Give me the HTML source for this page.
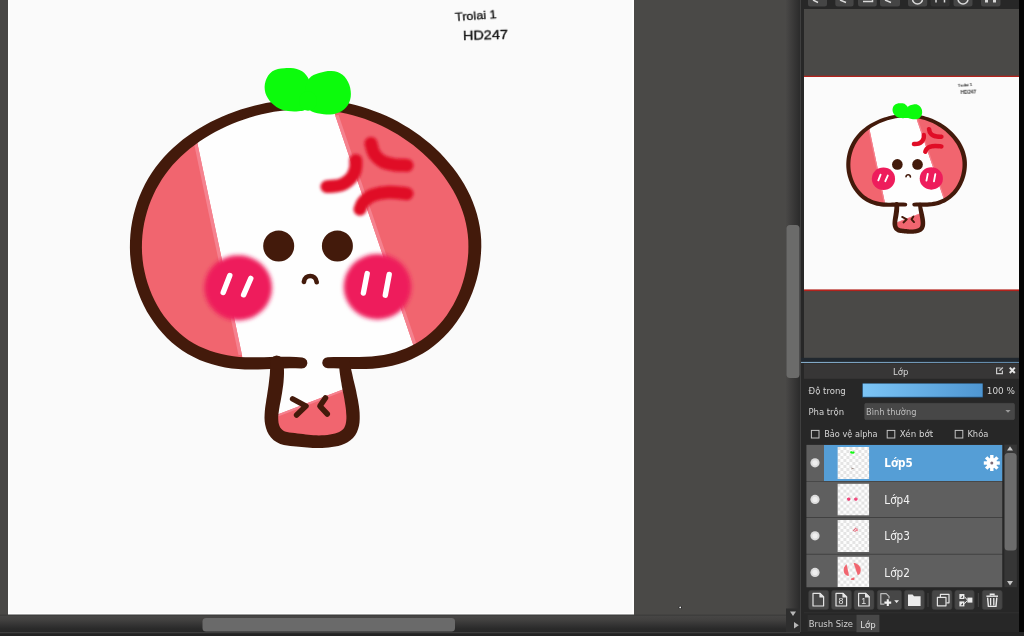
<!DOCTYPE html>
<html lang="vi"><head><meta charset="utf-8"><title>Lớp</title>
<style>html,body{margin:0;padding:0;background:#4a4947;overflow:hidden}svg{display:block}text{filter:url(#gray)}</style></head>
<body>
<svg width="1024" height="636" viewBox="0 0 1024 636">
<defs><filter id="gray" x="-5%" y="-30%" width="110%" height="160%"><feColorMatrix type="saturate" values="0"/></filter><g id="art">
<clipPath id="capclip"><path d="M301.9 363.0C298.8 362.9 289.5 362.5 283.2 362.5C276.9 362.6 270.6 363.1 264.2 363.2C257.9 363.4 251.5 363.7 245.2 363.4C238.8 363.0 232.4 362.5 226.2 361.3C220.0 360.2 213.7 358.6 207.8 356.5C202.0 354.4 196.2 351.8 190.8 348.7C185.5 345.6 180.4 341.9 175.7 337.8C171.1 333.8 166.7 329.2 162.8 324.3C158.9 319.5 155.3 314.2 152.2 308.7C149.1 303.2 146.4 297.4 144.2 291.5C141.9 285.5 140.1 279.3 138.7 273.1C137.4 266.9 136.5 260.5 136.1 254.1C135.7 247.8 135.8 241.3 136.4 235.0C137.0 228.7 138.0 222.4 139.5 216.2C141.0 210.1 142.9 204.0 145.3 198.2C147.6 192.4 150.4 186.7 153.5 181.3C156.7 175.9 160.3 170.8 164.2 165.9C168.1 161.1 172.4 156.5 177.0 152.3C181.5 148.0 186.4 144.0 191.5 140.3C196.6 136.6 201.9 133.1 207.4 130.0C212.9 126.9 218.7 124.0 224.5 121.4C230.3 118.8 236.3 116.5 242.3 114.5C248.4 112.5 254.5 110.8 260.7 109.3C266.8 107.9 273.1 106.7 279.3 105.9C285.6 105.0 291.9 104.5 298.1 104.2C304.4 104.0 310.7 104.0 317.0 104.4C323.2 104.7 329.5 105.4 335.7 106.3C341.9 107.3 348.0 108.6 354.1 110.1C360.2 111.7 366.2 113.6 372.1 115.9C378.0 118.1 383.8 120.7 389.5 123.5C395.2 126.4 400.8 129.6 406.1 133.1C411.5 136.6 416.7 140.4 421.7 144.4C426.6 148.5 431.4 152.8 435.8 157.4C440.2 161.9 444.4 166.7 448.2 171.7C452.1 176.7 455.6 182.0 458.7 187.4C461.8 192.8 464.5 198.4 466.8 204.1C469.0 209.9 470.9 215.8 472.2 221.8C473.5 227.9 474.4 234.1 474.7 240.3C475.0 246.6 474.8 253.0 474.1 259.3C473.4 265.6 472.2 272.0 470.6 278.2C468.9 284.4 466.8 290.5 464.2 296.4C461.6 302.3 458.6 308.0 455.2 313.4C451.8 318.7 448.0 323.9 443.8 328.5C439.6 333.2 435.0 337.5 430.1 341.2C425.1 345.0 419.8 348.3 414.3 351.1C408.8 354.0 402.9 356.3 396.9 358.1C391.0 359.9 384.7 361.1 378.4 361.9C372.2 362.8 365.6 362.8 359.3 363.0C352.9 363.1 345.4 362.8 340.1 362.7C334.8 362.7 329.7 362.8 327.7 362.8Z"/></clipPath>
<clipPath id="stemclip"><path d="M276.8 362.0C276.8 363.4 277.0 367.8 277.0 370.6C277.0 373.4 276.8 376.1 276.6 378.8C276.3 381.5 276.0 384.1 275.7 386.8C275.3 389.5 274.8 392.1 274.4 394.9C273.9 397.7 273.4 400.5 273.0 403.4C272.5 406.2 271.9 409.3 271.7 412.2C271.5 415.1 271.2 418.1 271.5 420.8C271.8 423.6 272.2 426.3 273.3 428.7C274.4 431.0 276.0 433.4 278.0 435.0C280.0 436.6 282.7 437.6 285.4 438.4C288.0 439.2 291.2 439.3 294.0 439.7C296.8 440.1 299.6 440.3 302.3 440.6C305.1 440.9 307.7 441.2 310.4 441.4C313.2 441.5 316.0 441.7 318.9 441.7C321.8 441.7 325.0 441.6 327.9 441.2C330.9 440.9 333.9 440.5 336.7 439.7C339.4 438.9 342.0 438.0 344.2 436.6C346.4 435.2 348.3 433.6 349.7 431.6C351.0 429.5 351.9 427.0 352.4 424.4C353.0 421.8 353.1 418.9 353.1 415.9C353.0 413.0 352.6 409.9 352.3 406.9C351.9 403.9 351.3 400.9 350.8 398.1C350.3 395.3 349.8 392.6 349.2 389.9C348.7 387.3 348.1 384.7 347.6 382.0C347.0 379.4 346.5 376.8 346.0 374.1C345.6 371.4 345.1 367.7 344.8 365.8C344.5 364.0 344.5 363.4 344.5 362.9Z"/></clipPath>
<filter id="b1" x="-20%" y="-20%" width="140%" height="140%"><feGaussianBlur stdDeviation="1.9"/></filter>
<filter id="b2" x="-20%" y="-20%" width="140%" height="140%"><feGaussianBlur stdDeviation="1.4"/></filter>
<g id="l-base">
 <path d="M301.9 363.0C298.8 362.9 289.5 362.5 283.2 362.5C276.9 362.6 270.6 363.1 264.2 363.2C257.9 363.4 251.5 363.7 245.2 363.4C238.8 363.0 232.4 362.5 226.2 361.3C220.0 360.2 213.7 358.6 207.8 356.5C202.0 354.4 196.2 351.8 190.8 348.7C185.5 345.6 180.4 341.9 175.7 337.8C171.1 333.8 166.7 329.2 162.8 324.3C158.9 319.5 155.3 314.2 152.2 308.7C149.1 303.2 146.4 297.4 144.2 291.5C141.9 285.5 140.1 279.3 138.7 273.1C137.4 266.9 136.5 260.5 136.1 254.1C135.7 247.8 135.8 241.3 136.4 235.0C137.0 228.7 138.0 222.4 139.5 216.2C141.0 210.1 142.9 204.0 145.3 198.2C147.6 192.4 150.4 186.7 153.5 181.3C156.7 175.9 160.3 170.8 164.2 165.9C168.1 161.1 172.4 156.5 177.0 152.3C181.5 148.0 186.4 144.0 191.5 140.3C196.6 136.6 201.9 133.1 207.4 130.0C212.9 126.9 218.7 124.0 224.5 121.4C230.3 118.8 236.3 116.5 242.3 114.5C248.4 112.5 254.5 110.8 260.7 109.3C266.8 107.9 273.1 106.7 279.3 105.9C285.6 105.0 291.9 104.5 298.1 104.2C304.4 104.0 310.7 104.0 317.0 104.4C323.2 104.7 329.5 105.4 335.7 106.3C341.9 107.3 348.0 108.6 354.1 110.1C360.2 111.7 366.2 113.6 372.1 115.9C378.0 118.1 383.8 120.7 389.5 123.5C395.2 126.4 400.8 129.6 406.1 133.1C411.5 136.6 416.7 140.4 421.7 144.4C426.6 148.5 431.4 152.8 435.8 157.4C440.2 161.9 444.4 166.7 448.2 171.7C452.1 176.7 455.6 182.0 458.7 187.4C461.8 192.8 464.5 198.4 466.8 204.1C469.0 209.9 470.9 215.8 472.2 221.8C473.5 227.9 474.4 234.1 474.7 240.3C475.0 246.6 474.8 253.0 474.1 259.3C473.4 265.6 472.2 272.0 470.6 278.2C468.9 284.4 466.8 290.5 464.2 296.4C461.6 302.3 458.6 308.0 455.2 313.4C451.8 318.7 448.0 323.9 443.8 328.5C439.6 333.2 435.0 337.5 430.1 341.2C425.1 345.0 419.8 348.3 414.3 351.1C408.8 354.0 402.9 356.3 396.9 358.1C391.0 359.9 384.7 361.1 378.4 361.9C372.2 362.8 365.6 362.8 359.3 363.0C352.9 363.1 345.4 362.8 340.1 362.7C334.8 362.7 329.7 362.8 327.7 362.8Z" fill="#fefefe"/>
 <path d="M276.8 362.0C276.8 363.4 277.0 367.8 277.0 370.6C277.0 373.4 276.8 376.1 276.6 378.8C276.3 381.5 276.0 384.1 275.7 386.8C275.3 389.5 274.8 392.1 274.4 394.9C273.9 397.7 273.4 400.5 273.0 403.4C272.5 406.2 271.9 409.3 271.7 412.2C271.5 415.1 271.2 418.1 271.5 420.8C271.8 423.6 272.2 426.3 273.3 428.7C274.4 431.0 276.0 433.4 278.0 435.0C280.0 436.6 282.7 437.6 285.4 438.4C288.0 439.2 291.2 439.3 294.0 439.7C296.8 440.1 299.6 440.3 302.3 440.6C305.1 440.9 307.7 441.2 310.4 441.4C313.2 441.5 316.0 441.7 318.9 441.7C321.8 441.7 325.0 441.6 327.9 441.2C330.9 440.9 333.9 440.5 336.7 439.7C339.4 438.9 342.0 438.0 344.2 436.6C346.4 435.2 348.3 433.6 349.7 431.6C351.0 429.5 351.9 427.0 352.4 424.4C353.0 421.8 353.1 418.9 353.1 415.9C353.0 413.0 352.6 409.9 352.3 406.9C351.9 403.9 351.3 400.9 350.8 398.1C350.3 395.3 349.8 392.6 349.2 389.9C348.7 387.3 348.1 384.7 347.6 382.0C347.0 379.4 346.5 376.8 346.0 374.1C345.6 371.4 345.1 367.7 344.8 365.8C344.5 364.0 344.5 363.4 344.5 362.9Z" fill="#fefefe"/>
</g>
<g id="l-pink">
 <g clip-path="url(#capclip)">
  <polygon points="100,90 185.6,90 197.2,142.4 241.9,354.8 246,380 100,380" fill="#f1656f"/>
  <line x1="195.5" y1="142.4" x2="240.2" y2="354.8" stroke="#f5828f" stroke-width="3.4"/>
  <polygon points="335.2,115.2 327,91 500,91 500,380 425,380 413.1,344.2" fill="#f1656f"/>
  <line x1="336.9" y1="115.2" x2="414.8" y2="344.2" stroke="#f5828f" stroke-width="3.4"/>
 </g>
 <g clip-path="url(#stemclip)">
  <polygon points="260,421.3 360,382.9 360,450 260,450" fill="#f1656f"/>
  <line x1="260" y1="422.3" x2="360" y2="383.9" stroke="#f5828f" stroke-width="2"/>
 </g>
</g>
<g id="l-anger" fill="none" stroke="#e00f27" stroke-width="13" stroke-linecap="round" filter="url(#b2)">
 <path d="M370.9 143.4C371.5 145.2 372.4 151.0 374.4 154.1C376.4 157.2 379.6 160.0 382.9 161.8C386.2 163.6 390.2 164.1 394.2 164.7C398.2 165.3 404.9 165.3 407.0 165.4"/>
 <path d="M355.8 160.4C355.7 161.9 356.2 166.5 355.3 169.6C354.4 172.7 352.9 176.2 350.4 178.8C347.9 181.4 344.4 183.9 340.5 185.2C336.6 186.5 329.2 186.4 327.0 186.6"/>
 <path d="M360.0 209.2C360.6 207.9 361.6 203.8 363.8 201.5C366.0 199.2 368.9 196.6 373.0 195.1C377.1 193.6 382.9 192.5 388.6 192.3C394.3 192.1 403.9 193.5 407.0 193.7"/>
</g>
<g id="l-blush">
 <ellipse cx="238.2" cy="287.8" rx="33.8" ry="32.6" fill="#ee1c5b" filter="url(#b1)"/>
 <ellipse cx="377.5" cy="286.7" rx="33.8" ry="32.8" fill="#ee1c5b" filter="url(#b1)"/>
 <g stroke="#fff" stroke-width="5.4" stroke-linecap="round">
  <line x1="229.8" y1="275.6" x2="223.2" y2="292.4"/>
  <line x1="250.8" y1="278.4" x2="243.6" y2="294.8"/>
  <line x1="367.2" y1="273.6" x2="363.4" y2="293"/>
  <line x1="389.2" y1="274.4" x2="385.3" y2="295.2"/>
 </g>
</g>
<g id="l-line">
 <circle cx="278.7" cy="246" r="15.5" fill="#431a0b"/>
 <circle cx="337.4" cy="246" r="15.5" fill="#431a0b"/>
 <g fill="none" stroke="#431a0b" stroke-linecap="round" stroke-linejoin="round">
  <path d="M303.9 281.8C305 274 315.6 274 316.7 282.2" stroke-width="4.7"/>
  <path d="M292.6 398.8L306 406.1L296.6 415" stroke-width="5.5"/>
  <path d="M325.5 397.9L319.9 406.1L327.3 414" stroke-width="5.5"/>
 </g>
 <path d="M302.3 357.5L296.0 357.0L289.5 356.7L283.1 356.7L276.7 356.8L270.3 356.9L264.0 357.2L257.7 357.3L251.5 357.3L245.4 357.2L239.3 356.9L233.3 356.2L227.3 355.3L221.4 354.1L215.6 352.6L209.9 350.8L204.4 348.6L199.0 346.2L193.9 343.5L188.9 340.4L184.2 337.0L179.7 333.3L175.4 329.3L171.3 325.1L167.5 320.6L163.9 315.9L160.5 310.9L157.4 305.8L154.6 300.5L152.0 295.0L149.7 289.3L147.7 283.6L146.0 277.8L144.6 271.8L143.4 265.8L142.6 259.8L142.1 253.7L141.9 247.7L142.0 241.6L142.4 235.6L143.1 229.5L144.1 223.6L145.4 217.7L147.0 211.8L148.8 206.1L150.9 200.5L153.3 195.0L155.9 189.6L158.8 184.4L161.9 179.3L165.2 174.4L168.8 169.7L172.6 165.1L176.7 160.7L180.9 156.5L185.4 152.5L190.0 148.6L194.8 144.9L199.8 141.3L204.9 138.0L210.2 134.8L215.5 131.8L221.0 128.9L226.7 126.3L232.4 123.8L238.1 121.5L244.0 119.4L249.9 117.5L255.8 115.8L261.8 114.3L267.9 113.0L273.9 111.8L280.0 110.9L286.1 110.2L292.2 109.6L298.4 109.3L304.5 109.1L310.6 109.2L316.7 109.4L322.8 109.9L328.9 110.5L334.9 111.4L340.9 112.5L346.9 113.7L352.8 115.2L358.7 116.9L364.5 118.8L370.2 120.9L375.9 123.2L381.5 125.7L387.0 128.5L392.4 131.4L397.8 134.5L403.0 137.9L408.1 141.4L413.1 145.1L417.9 149.0L422.6 153.0L427.1 157.2L431.5 161.6L435.6 166.1L439.6 170.7L443.3 175.5L446.8 180.4L450.1 185.4L453.2 190.5L456.0 195.8L458.5 201.1L460.8 206.5L462.8 212.0L464.5 217.6L465.9 223.2L467.0 229.0L467.8 234.8L468.3 240.7L468.4 246.6L468.3 252.6L467.8 258.6L467.0 264.6L465.9 270.6L464.5 276.6L462.8 282.5L460.9 288.3L458.6 294.0L456.0 299.5L453.2 304.9L450.1 310.1L446.8 315.2L443.2 320.0L439.3 324.5L435.3 328.8L430.9 332.8L426.4 336.5L421.6 339.9L416.7 343.0L411.5 345.7L406.2 348.2L400.8 350.3L395.2 352.2L389.4 353.7L383.6 354.9L377.7 355.8L371.6 356.4L365.5 356.8L359.2 357.0L352.9 357.0L346.5 357.0L340.2 357.0L333.8 357.1L327.6 357.3L324.9 358.1L322.9 360.1L322.2 362.9L323.0 365.6L325.0 367.6L327.8 368.3L333.9 368.3L340.0 368.5L346.3 368.7L352.8 368.9L359.3 369.0L365.9 368.9L372.5 368.7L379.2 368.1L385.8 367.1L392.3 365.7L398.7 364.0L405.0 361.9L411.1 359.4L417.1 356.6L422.8 353.4L428.4 349.9L433.7 346.0L438.8 341.8L443.6 337.3L448.2 332.5L452.5 327.4L456.6 322.1L460.3 316.6L463.8 310.9L466.9 304.9L469.8 298.8L472.4 292.6L474.6 286.3L476.6 279.8L478.2 273.3L479.5 266.7L480.4 260.0L481.0 253.3L481.3 246.7L481.2 240.0L480.7 233.4L479.8 226.9L478.5 220.4L476.9 214.1L475.0 207.9L472.7 201.8L470.2 195.8L467.3 189.9L464.2 184.2L460.8 178.7L457.1 173.2L453.2 168.0L449.0 162.9L444.7 157.9L440.1 153.1L435.4 148.5L430.5 144.1L425.4 139.9L420.1 135.8L414.7 132.0L409.2 128.3L403.6 124.9L397.8 121.6L392.0 118.6L386.1 115.8L380.1 113.2L374.0 110.9L367.9 108.7L361.7 106.8L355.4 105.1L349.2 103.6L342.8 102.3L336.5 101.2L330.1 100.4L323.7 99.7L317.3 99.3L310.8 99.0L304.4 99.0L297.9 99.2L291.5 99.5L285.1 100.1L278.6 100.9L272.2 101.9L265.9 103.0L259.5 104.4L253.2 105.9L246.9 107.7L240.7 109.6L234.5 111.7L228.4 114.0L222.4 116.5L216.4 119.2L210.5 122.1L204.7 125.2L199.1 128.5L193.5 132.0L188.1 135.7L182.9 139.6L177.9 143.7L173.0 148.0L168.3 152.5L163.8 157.3L159.6 162.2L155.6 167.3L151.8 172.7L148.3 178.3L145.1 184.0L142.2 189.9L139.6 195.9L137.3 202.1L135.3 208.4L133.6 214.8L132.2 221.3L131.1 227.9L130.4 234.5L130.0 241.1L129.9 247.8L130.1 254.5L130.7 261.1L131.6 267.8L132.9 274.3L134.5 280.8L136.4 287.3L138.6 293.6L141.1 299.7L143.9 305.8L147.0 311.7L150.5 317.3L154.2 322.8L158.1 328.1L162.4 333.1L167.0 337.9L171.8 342.4L176.8 346.6L182.2 350.4L187.8 353.9L193.6 357.1L199.6 359.9L205.8 362.3L212.1 364.3L218.6 366.0L225.1 367.4L231.7 368.4L238.3 369.1L244.9 369.5L251.5 369.6L258.0 369.5L264.4 369.3L270.8 369.0L277.1 368.7L283.3 368.4L289.4 368.3L295.5 368.3L301.6 368.5L304.4 367.9L306.5 366.0L307.4 363.3L306.9 360.6L305.0 358.4Z" fill="#431a0b"/>
 <path d="M270.3 362.3L270.3 365.2L270.2 367.8L270.0 370.5L269.9 373.0L269.7 375.6L269.4 378.1L269.1 380.7L268.8 383.2L268.5 385.8L268.1 388.4L267.7 391.0L267.3 393.7L266.9 396.5L266.4 399.3L266.0 402.2L265.5 405.2L265.1 408.3L264.8 411.5L264.6 414.8L264.5 418.0L264.7 421.4L265.2 424.7L266.0 428.1L267.2 431.4L268.8 434.5L271.0 437.5L273.7 440.2L276.9 442.3L280.3 443.9L283.8 444.9L287.1 445.6L290.3 446.0L293.3 446.3L296.1 446.6L298.9 446.8L301.6 447.1L304.4 447.3L307.2 447.6L310.0 447.7L312.9 447.9L315.9 447.9L318.9 448.0L322.1 447.9L325.3 447.8L328.6 447.5L331.8 447.1L335.1 446.6L338.3 445.9L341.5 444.9L344.6 443.7L347.6 442.2L350.4 440.3L353.0 438.0L355.2 435.2L356.9 432.2L358.1 429.0L359.0 425.7L359.5 422.4L359.7 419.1L359.7 415.8L359.6 412.5L359.3 409.2L358.9 406.0L358.4 402.9L357.9 399.8L357.3 396.9L356.7 394.1L356.2 391.3L355.6 388.6L355.0 386.0L354.4 383.4L353.7 380.8L353.1 378.2L352.6 375.7L352.0 373.1L351.4 370.5L350.9 367.9L350.4 365.2L349.9 362.3L348.9 359.7L346.7 357.9L343.9 357.5L341.2 358.5L339.5 360.7L339.0 363.5L339.2 366.5L339.4 369.5L339.7 372.3L340.1 375.2L340.5 377.9L340.9 380.6L341.4 383.3L341.8 386.0L342.3 388.6L342.8 391.3L343.4 393.9L343.9 396.6L344.4 399.3L344.8 402.1L345.3 404.9L345.7 407.8L346.0 410.6L346.2 413.4L346.4 416.1L346.4 418.6L346.2 421.0L345.9 423.1L345.4 425.0L344.8 426.6L344.1 427.9L343.3 429.0L342.2 430.0L340.8 431.0L339.2 431.9L337.2 432.8L335.0 433.5L332.5 434.1L330.0 434.6L327.3 435.0L324.5 435.2L321.7 435.3L318.9 435.4L316.2 435.3L313.5 435.2L310.9 435.0L308.3 434.7L305.7 434.4L303.0 434.1L300.3 433.8L297.5 433.4L294.7 433.1L291.9 432.8L289.3 432.4L287.0 431.9L285.0 431.4L283.5 430.7L282.2 429.8L281.2 428.7L280.2 427.4L279.5 426.0L278.9 424.3L278.5 422.4L278.3 420.3L278.2 418.0L278.3 415.5L278.6 412.9L279.0 410.1L279.4 407.4L279.9 404.5L280.5 401.7L281.0 398.9L281.5 396.1L282.0 393.3L282.4 390.6L282.8 387.8L283.2 385.0L283.5 382.2L283.7 379.4L283.9 376.5L284.0 373.6L284.0 370.7L283.9 367.7L283.6 364.7L283.3 361.7L282.3 358.5L279.8 356.2L276.5 355.5L273.3 356.5L271.0 359.0Z" fill="#431a0b"/>
</g>
<g id="l-leaf" fill="#0cfb0c"><path d="M264.6 86.9C264.6 85.0 265.0 82.8 265.6 80.9C266.2 79.0 267.1 77.0 268.2 75.4C269.4 73.8 270.8 72.3 272.4 71.2C274.0 70.2 275.9 69.5 277.9 69.0C279.9 68.5 282.1 68.4 284.2 68.2C286.3 68.1 288.6 68.0 290.7 68.1C292.8 68.2 294.9 68.4 296.8 68.9C298.7 69.4 300.5 70.3 302.1 71.3C303.7 72.4 305.1 73.8 306.3 75.3C307.6 76.8 308.6 78.6 309.4 80.4C310.1 82.2 310.7 84.2 311.0 86.3C311.3 88.3 311.4 90.4 311.2 92.5C311.1 94.6 310.6 96.7 310.2 98.8C309.7 100.8 309.1 103.0 308.3 104.8C307.5 106.6 306.8 108.4 305.4 109.4C304.1 110.5 302.2 110.8 300.3 111.1C298.4 111.5 296.2 111.4 294.2 111.4C292.1 111.4 290.0 111.4 288.0 111.1C285.9 110.8 283.9 110.4 282.0 109.7C280.0 109.0 278.2 108.1 276.4 107.0C274.7 105.9 273.1 104.5 271.6 103.1C270.2 101.6 268.9 100.0 267.9 98.3C266.9 96.6 266.0 94.8 265.4 92.9C264.9 91.0 264.6 88.9 264.6 86.9Z"/><path d="M306.5 83.7C307.1 81.8 308.0 80.0 309.2 78.5C310.3 77.1 311.8 76.1 313.5 75.1C315.1 74.2 317.1 73.5 319.1 72.9C321.0 72.3 323.2 71.7 325.2 71.4C327.3 71.1 329.5 70.9 331.5 71.0C333.6 71.1 335.6 71.3 337.5 72.0C339.3 72.6 341.0 73.6 342.5 74.8C344.1 76.0 345.4 77.5 346.5 79.2C347.6 80.9 348.6 82.8 349.3 84.7C350.0 86.7 350.5 88.8 350.7 90.9C350.9 92.9 351.0 95.1 350.7 97.1C350.4 99.1 349.9 101.1 349.1 102.8C348.4 104.6 347.3 106.2 346.0 107.6C344.7 109.1 343.2 110.3 341.5 111.3C339.8 112.3 338.0 113.1 336.1 113.6C334.2 114.2 332.1 114.4 330.0 114.5C328.0 114.6 325.9 114.4 323.8 114.2C321.7 114.0 319.4 113.8 317.4 113.3C315.4 112.9 313.4 112.4 311.8 111.5C310.2 110.6 308.9 109.3 307.8 107.7C306.8 106.2 306.1 104.2 305.6 102.3C305.1 100.3 304.9 98.1 304.8 96.0C304.7 93.9 304.8 91.7 305.1 89.7C305.4 87.6 305.8 85.6 306.5 83.7Z"/><ellipse cx="308" cy="101" rx="9" ry="9.8"/></g>
<g id="l-text" fill="#141414" stroke="#141414" stroke-width="0.35" font-family="'Liberation Sans','DejaVu Sans',sans-serif">
 <text x="455.2" y="20.6" font-size="11.6" textLength="41.5" lengthAdjust="spacingAndGlyphs" transform="rotate(-4 455 20)">Trolai 1</text>
 <text x="463" y="40" font-size="13.6" textLength="45" lengthAdjust="spacingAndGlyphs" transform="rotate(-1.5 463 40)">HD247</text>
</g>
</g></defs>
<rect width="1024" height="636" fill="#4a4947"/>
<rect x="8" y="0" width="626" height="614.7" fill="#fff"/><rect x="9.8" y="0" width="622.4" height="612.9" fill="#fafafa"/>
<svg x="8" y="0" width="626" height="614.6" viewBox="8 0 626 614.6"><use href="#art"/></svg>

<!-- scrollbars of the canvas -->
<linearGradient id="hs" x1="0" y1="0" x2="0" y2="1"><stop offset="0" stop-color="#353535"/><stop offset="0.09" stop-color="#474645"/><stop offset="0.3" stop-color="#424140"/><stop offset="0.8" stop-color="#2a2a2a"/><stop offset="1" stop-color="#272727"/></linearGradient>
<linearGradient id="vs" x1="0" y1="0" x2="1" y2="0"><stop offset="0" stop-color="#4b4a48"/><stop offset="0.25" stop-color="#434241"/><stop offset="1" stop-color="#2b2b2b"/></linearGradient>
<rect x="0" y="614.7" width="800" height="17.3" fill="url(#hs)"/>
<rect x="785" y="0" width="15" height="609" fill="url(#vs)"/>
<rect x="786" y="608.5" width="14" height="23.5" fill="#2e2e2e"/>
<rect x="202.5" y="618" width="252.5" height="13.5" rx="3.5" fill="#6a6a6a"/>
<rect x="786.5" y="225" width="13" height="153" rx="3.5" fill="#6b6b6a"/>
<path d="M790 611.5h6l-3 4.6z" fill="#b8b8b8"/>
<path d="M794 622v6.4l4.8-3.2z" fill="#b8b8b8"/>
<circle cx="680.2" cy="607.4" r="1.7" fill="#2a2a2a"/><circle cx="680.2" cy="607.4" r="0.9" fill="#f4f4f4"/>
<!-- right dock -->
<rect x="800" y="0" width="224" height="636" fill="#272727"/>
<rect x="1019" y="0" width="5" height="636" fill="#050505"/>
<rect x="0" y="632" width="1024" height="4" fill="#232323"/><rect x="0" y="632" width="800" height="1.3" fill="#3e3e3e"/><rect x="800" y="0" width="1" height="632" fill="#3f3f3f"/>
<rect x="804" y="9" width="215" height="349" fill="#4a4947"/>
<!-- top toolbar fragments -->
<g fill="#454545">
 <rect x="808" y="-6" width="19" height="12.4" rx="2.5"/><rect x="835.3" y="-6" width="18.3" height="12.4" rx="2.5"/>
 <rect x="858" y="-6" width="18.8" height="12.4" rx="2.5"/><rect x="880" y="-6" width="20" height="12.4" rx="2.5"/>
 <rect x="908" y="-6" width="19.2" height="12.4" rx="2.5"/><rect x="930.6" y="-6" width="19" height="12.4" rx="2.5" fill="#333"/>
 <rect x="953.5" y="-6" width="19" height="12.4" rx="2.5"/><rect x="981" y="-6" width="19.5" height="12.4" rx="2.5"/>
</g>
<g stroke="#d8d8d8" stroke-width="1.5" fill="none">
 <path d="M813 0l5 2.5M840 0l6 2.5M863 1.6h9.5v-2M885 0l6 2.5"/>
 <path d="M912.5 -1a5 5 0 0 0 10 0M958 -1a5 5 0 0 0 10 0"/>
 <path d="M936 0v2.5M944.5 0v2.5"/>
 <path d="M986.5 0v2.4M994.5 0v2.4" stroke-width="3"/>
</g>
<!-- navigator -->
<rect x="804" y="75.7" width="215" height="215.4" fill="#b3221c"/>
<rect x="804" y="77" width="215" height="212.4" fill="#fbfbfb"/>
<svg x="804" y="77" width="215" height="212.6" viewBox="804 77 215 212.6"><use href="#art" transform="translate(801.66,79.95) scale(0.3434)"/></svg>
<!-- layer panel -->
<rect x="801" y="357.8" width="218" height="4.4" fill="#21282f"/>
<linearGradient id="bl" x1="0" y1="0" x2="1" y2="0"><stop offset="0" stop-color="#84abc8"/><stop offset="1" stop-color="#5f86a6"/></linearGradient>
<rect x="801" y="361.9" width="218" height="1.1" fill="url(#bl)"/>
<rect x="804" y="363.4" width="215" height="15.4" fill="#373636"/>
<text x="893" y="374.6" font-size="9.4" fill="#d6d6d6" textLength="15.4" lengthAdjust="spacingAndGlyphs" font-family="'DejaVu Sans Condensed','DejaVu Sans','Liberation Sans',sans-serif">Lớp</text>
<g stroke="#c9c9c9" fill="none" stroke-width="1.2"><path d="M1000.6 368h-4v5.6h5.8v-3.2"/><path d="M999.4 370.8l3.4-3.4" stroke-width="1.4"/></g>
<path d="M1009.8 367.6l5 5.4M1014.8 367.6l-5 5.4" stroke="#e6e6e6" stroke-width="2" fill="none"/>
<text x="808.6" y="394.4" font-size="9.4" fill="#d4d4d4" textLength="37.2" lengthAdjust="spacingAndGlyphs" font-family="'DejaVu Sans Condensed','DejaVu Sans','Liberation Sans',sans-serif">Độ trong</text>
<linearGradient id="op" x1="0" y1="0" x2="1" y2="0"><stop offset="0" stop-color="#7cc5f6"/><stop offset="1" stop-color="#4e96d2"/></linearGradient>
<rect x="862.2" y="383.4" width="120.6" height="14.4" fill="#21496d"/>
<rect x="862.8" y="383.6" width="119.8" height="13.2" fill="url(#op)"/>
<text x="986.8" y="394.4" font-size="9.4" fill="#d4d4d4" textLength="28.2" lengthAdjust="spacingAndGlyphs" font-family="'DejaVu Sans Condensed','DejaVu Sans','Liberation Sans',sans-serif">100 %</text>
<text x="808.4" y="415" font-size="9.4" fill="#d4d4d4" textLength="35.8" lengthAdjust="spacingAndGlyphs" font-family="'DejaVu Sans Condensed','DejaVu Sans','Liberation Sans',sans-serif">Pha trộn</text>
<rect x="864.8" y="403.4" width="149.6" height="16.2" rx="1.2" fill="#474747" stroke="#4e4e4e" stroke-width="0.6"/>
<text x="866" y="415" font-size="9.4" fill="#bdbdbd" textLength="50.4" lengthAdjust="spacingAndGlyphs" font-family="'DejaVu Sans Condensed','DejaVu Sans','Liberation Sans',sans-serif">Bình thường</text>
<path d="M1005.4 410h5.2l-2.6 2.8z" fill="#9a9a9a"/>
<g fill="none" stroke="#c4c4c4" stroke-width="1"><rect x="811.4" y="430.4" width="7.6" height="7.6"/><rect x="887.2" y="430.4" width="7.6" height="7.6"/><rect x="955.2" y="430.4" width="7.6" height="7.6"/></g>
<text x="824.2" y="437.4" font-size="9.4" fill="#d4d4d4" textLength="53.4" lengthAdjust="spacingAndGlyphs" font-family="'DejaVu Sans Condensed','DejaVu Sans','Liberation Sans',sans-serif">Bảo vệ alpha</text>
<text x="899.8" y="437.4" font-size="9.4" fill="#d4d4d4" textLength="33.4" lengthAdjust="spacingAndGlyphs" font-family="'DejaVu Sans Condensed','DejaVu Sans','Liberation Sans',sans-serif">Xén bớt</text>
<text x="967.4" y="437.4" font-size="9.4" fill="#d4d4d4" textLength="21" lengthAdjust="spacingAndGlyphs" font-family="'DejaVu Sans Condensed','DejaVu Sans','Liberation Sans',sans-serif">Khóa</text>
<pattern id="chk" width="6" height="6" patternUnits="userSpaceOnUse"><rect width="6" height="6" fill="#fdfdfd"/><rect width="3" height="3" fill="#e4e4e4"/><rect x="3" y="3" width="3" height="3" fill="#e4e4e4"/></pattern>
<rect x="806.5" y="444.6" width="195.7" height="142.6" fill="#3a3a3a"/>
<rect x="806.5" y="445" width="195.7" height="36" fill="#5f5f5f"/><rect x="824" y="445" width="178.2" height="36" fill="#559ed6"/><circle cx="815" cy="462.8" r="4.6" fill="#dcdcdc"/><circle cx="815" cy="462.8" r="2.6" fill="#efefef"/><svg x="837.4" y="447" width="31.8" height="32" viewBox="0 0 31.8 32"><rect width="32" height="32" fill="url(#chk)"/><g transform="translate(-0.4,0.4) scale(0.0511)"><g transform="translate(-8,8)"><use href="#l-leaf"/><path d="M293.2 399.4L305 406L296.2 414M325.3 397.5L319.6 405L327.2 413.6" stroke="#431a0b" stroke-width="14" fill="none"/></g></g></svg><text x="884.3" y="467" font-size="11.5" font-weight="bold" fill="#fff" textLength="28.4" lengthAdjust="spacingAndGlyphs" font-family="'DejaVu Sans Condensed','DejaVu Sans','Liberation Sans',sans-serif">Lớp5</text>
<rect x="806.5" y="481.6" width="195.7" height="35.6" fill="#5f5f5f"/><circle cx="815" cy="499.40000000000003" r="4.6" fill="#dcdcdc"/><circle cx="815" cy="499.40000000000003" r="2.6" fill="#efefef"/><svg x="837.4" y="483.6" width="31.8" height="32" viewBox="0 0 31.8 32"><rect width="32" height="32" fill="url(#chk)"/><g transform="translate(-0.4,0.4) scale(0.0511)"><g transform="translate(-8,8)"><use href="#l-blush"/></g></g></svg><text x="884.3" y="503.6" font-size="11.5" fill="#f2f2f2" textLength="25.6" lengthAdjust="spacingAndGlyphs" font-family="'DejaVu Sans Condensed','DejaVu Sans','Liberation Sans',sans-serif">Lớp4</text>
<rect x="806.5" y="518" width="195.7" height="35.8" fill="#5f5f5f"/><circle cx="815" cy="535.8" r="4.6" fill="#dcdcdc"/><circle cx="815" cy="535.8" r="2.6" fill="#efefef"/><svg x="837.4" y="520" width="31.8" height="32" viewBox="0 0 31.8 32"><rect width="32" height="32" fill="url(#chk)"/><g transform="translate(-0.4,0.4) scale(0.0511)"><g transform="translate(-8,8)"><use href="#l-anger"/></g></g></svg><text x="884.3" y="540" font-size="11.5" fill="#f2f2f2" textLength="25.6" lengthAdjust="spacingAndGlyphs" font-family="'DejaVu Sans Condensed','DejaVu Sans','Liberation Sans',sans-serif">Lớp3</text>
<rect x="806.5" y="554.6" width="195.7" height="32.6" fill="#5f5f5f"/><circle cx="815" cy="572.4" r="4.6" fill="#dcdcdc"/><circle cx="815" cy="572.4" r="2.6" fill="#efefef"/><svg x="837.4" y="556.6" width="31.8" height="30.399999999999977" viewBox="0 0 31.8 30.399999999999977"><rect width="32" height="32" fill="url(#chk)"/><g transform="translate(-0.4,0.4) scale(0.0511)"><g transform="translate(-8,8)"><use href="#l-pink"/></g></g></svg><text x="884.3" y="576.6" font-size="11.5" fill="#f2f2f2" textLength="25.6" lengthAdjust="spacingAndGlyphs" font-family="'DejaVu Sans Condensed','DejaVu Sans','Liberation Sans',sans-serif">Lớp2</text>
<g transform="translate(991.8,463)" fill="#fff">
 <circle r="5.2"/>
 <g id="tooth"><rect x="-1.7" y="-8" width="3.4" height="16"/></g>
 <use href="#tooth" transform="rotate(45)"/><use href="#tooth" transform="rotate(90)"/><use href="#tooth" transform="rotate(135)"/>
 <circle r="1.5" fill="#7d6b78"/>
</g>
<!-- layer list scrollbar -->
<rect x="1004.3" y="444.6" width="12.6" height="142.6" fill="#363636"/>
<rect x="1004.6" y="453" width="12" height="97.6" rx="3.5" fill="#6c6c6c"/>
<path d="M1007 450.6h6l-3 -4.4z" fill="#c6c6c6"/>
<path d="M1007 581h6l-3 4.6z" fill="#c6c6c6"/>
<!-- bottom buttons -->
<rect x="808.7" y="590.3" width="20" height="19.3" rx="2.5" fill="#474747" stroke="#3c3c3c" stroke-width="0.6"/><rect x="831.5" y="590.3" width="20" height="19.3" rx="2.5" fill="#474747" stroke="#3c3c3c" stroke-width="0.6"/><rect x="854" y="590.3" width="20" height="19.3" rx="2.5" fill="#474747" stroke="#3c3c3c" stroke-width="0.6"/><rect x="877.2" y="590.3" width="24.4" height="19.3" rx="2.5" fill="#474747" stroke="#3c3c3c" stroke-width="0.6"/><rect x="904.3" y="590.3" width="20" height="19.3" rx="2.5" fill="#474747" stroke="#3c3c3c" stroke-width="0.6"/><rect x="932" y="590.3" width="20" height="19.3" rx="2.5" fill="#474747" stroke="#3c3c3c" stroke-width="0.6"/><rect x="954.8" y="590.3" width="19.4" height="19.3" rx="2.5" fill="#474747" stroke="#3c3c3c" stroke-width="0.6"/><rect x="982.2" y="590.3" width="20" height="19.3" rx="2.5" fill="#474747" stroke="#3c3c3c" stroke-width="0.6"/>
<rect x="927.4" y="593" width="1.2" height="14" fill="#3e3e3e"/><rect x="977.8" y="593" width="1.2" height="14" fill="#3e3e3e"/>
<g fill="none" stroke="#e4e4e4" stroke-width="1.2" stroke-linejoin="round">
 <path d="M813 593.4h7l3.6 3.6v9h-10.6z"/><path d="M820 593.4v3.6h3.6z" fill="#e4e4e4"/>
 <path d="M836 593.4h7l3.6 3.6v9h-10.6z"/><path d="M843 593.4v3.6h3.6z" fill="#e4e4e4"/>
 <path d="M858.6 593.4h7l3.6 3.6v9h-10.6z"/><path d="M865.6 593.4v3.6h3.6z" fill="#e4e4e4"/>
 <path d="M884.4 604.2h-3.6v-10.6h5.4l2.8 2.8v2.2" stroke="#bdbdbd"/>
 <path d="M887.8 599.2v6.8M884.4 602.6h6.8" stroke-width="2.1" stroke="#f2f2f2" stroke-linejoin="miter"/>
 <path d="M937.4 597.4h8.6v8.4h-8.6z"/><path d="M940.4 597v-2.6h8.6v8.4h-2.6"/>
</g>
<text x="840.9" y="603.6" font-size="8.8" fill="#e4e4e4" text-anchor="middle" font-family="'Liberation Sans',sans-serif">8</text>
<text x="863.6" y="603.6" font-size="8.8" fill="#e4e4e4" text-anchor="middle" font-family="'Liberation Sans',sans-serif">1</text>
<path d="M894.2 600.2h4.8l-2.4 2.8z" fill="#e8e8e8"/>
<path d="M908 606v-11.6h4.6l1.4 1.8h6.6v9.8z" fill="#ececec"/>
<g fill="#ececec"><rect x="959.4" y="594" width="5" height="5"/><rect x="959.4" y="601.4" width="5" height="5"/><rect x="967.4" y="597.6" width="5" height="5"/></g>
<path d="M964.4 596.6l3 3.4M964.4 603.8l3-3.4" stroke="#ececec" stroke-width="1" fill="none"/>
<g fill="#474747"><path d="M960.6 597.8l2.4-2.4v2.4z"/><path d="M960.6 605.2l2.4-2.4v2.4z"/></g>
<g fill="none" stroke="#ececec" stroke-width="1.4"><path d="M986.4 596.2h11.6"/><path d="M990.4 595.6v-1.4h3.6v1.4"/><path d="M987.6 597.6l.8 8.8h7.6l.8-8.8"/><path d="M990.6 598v7.4M993.8 598v7.4" stroke-width="1.3"/></g>
<!-- tabs -->
<rect x="804" y="612.4" width="215" height="0.8" fill="#333"/>
<rect x="807.6" y="615" width="48.6" height="16" fill="#2e2e2e"/>
<text x="808.8" y="626.5" font-size="9.4" fill="#cfcfcf" textLength="44.2" lengthAdjust="spacingAndGlyphs" font-family="'DejaVu Sans Condensed','DejaVu Sans','Liberation Sans',sans-serif">Brush Size</text>
<rect x="856.4" y="614.8" width="23" height="17.4" fill="#484848"/>
<text x="860.2" y="627.6" font-size="9.4" fill="#e0e0e0" textLength="15.4" lengthAdjust="spacingAndGlyphs" font-family="'DejaVu Sans Condensed','DejaVu Sans','Liberation Sans',sans-serif">Lớp</text>

</svg>
</body></html>
